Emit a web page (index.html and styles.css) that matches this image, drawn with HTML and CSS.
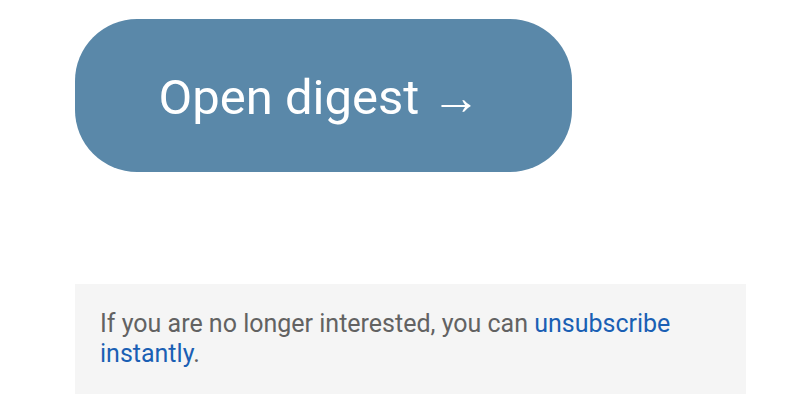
FILE: index.html
```html
<!DOCTYPE html>
<html lang="en">
<head>
  <meta charset="UTF-8" />
  <meta name="viewport" content="width=device-width, initial-scale=1.0" />
  <title>Digest</title>
  <link rel="stylesheet" href="styles.css">
</head>
<body>
  <div class="page">
    <!-- Main call to action -->
    <a class="cta" href="#">Open digest →</a>

    <!-- Footer note -->
    <div class="footer-note">
      If you are no longer interested, you can <a href="#">unsubscribe instantly</a>.
    </div>
  </div>
</body>
</html>
```

FILE: styles.css
```css
body {
  margin: 0;
  background-color: #ffffff;
  font-family: Roboto, 'Noto Sans', sans-serif;
}
.page {
  display: flex;
  flex-direction: column;
  align-items: flex-start;
  padding: 19px 54px 0 75px;
}
.cta {
  display: flex;
  justify-content: center;
  align-items: center;
  box-sizing: border-box;
  width: 497px;
  height: 153px;
  border-radius: 62px;
  background-color: #5a88a9;
  color: #ffffff;
  font-size: 49px;
  text-decoration: none;
  padding: 4px 8px 0 0;
}
.footer-note {
  box-sizing: border-box;
  width: 671px;
  margin-top: 112px;
  padding: 25px 25px;
  background-color: #f5f5f5;
  color: #626262;
  font-size: 25px;
  line-height: 30px;
}
.footer-note a {
  color: #1a5fb4;
  text-decoration: none;
}
```
